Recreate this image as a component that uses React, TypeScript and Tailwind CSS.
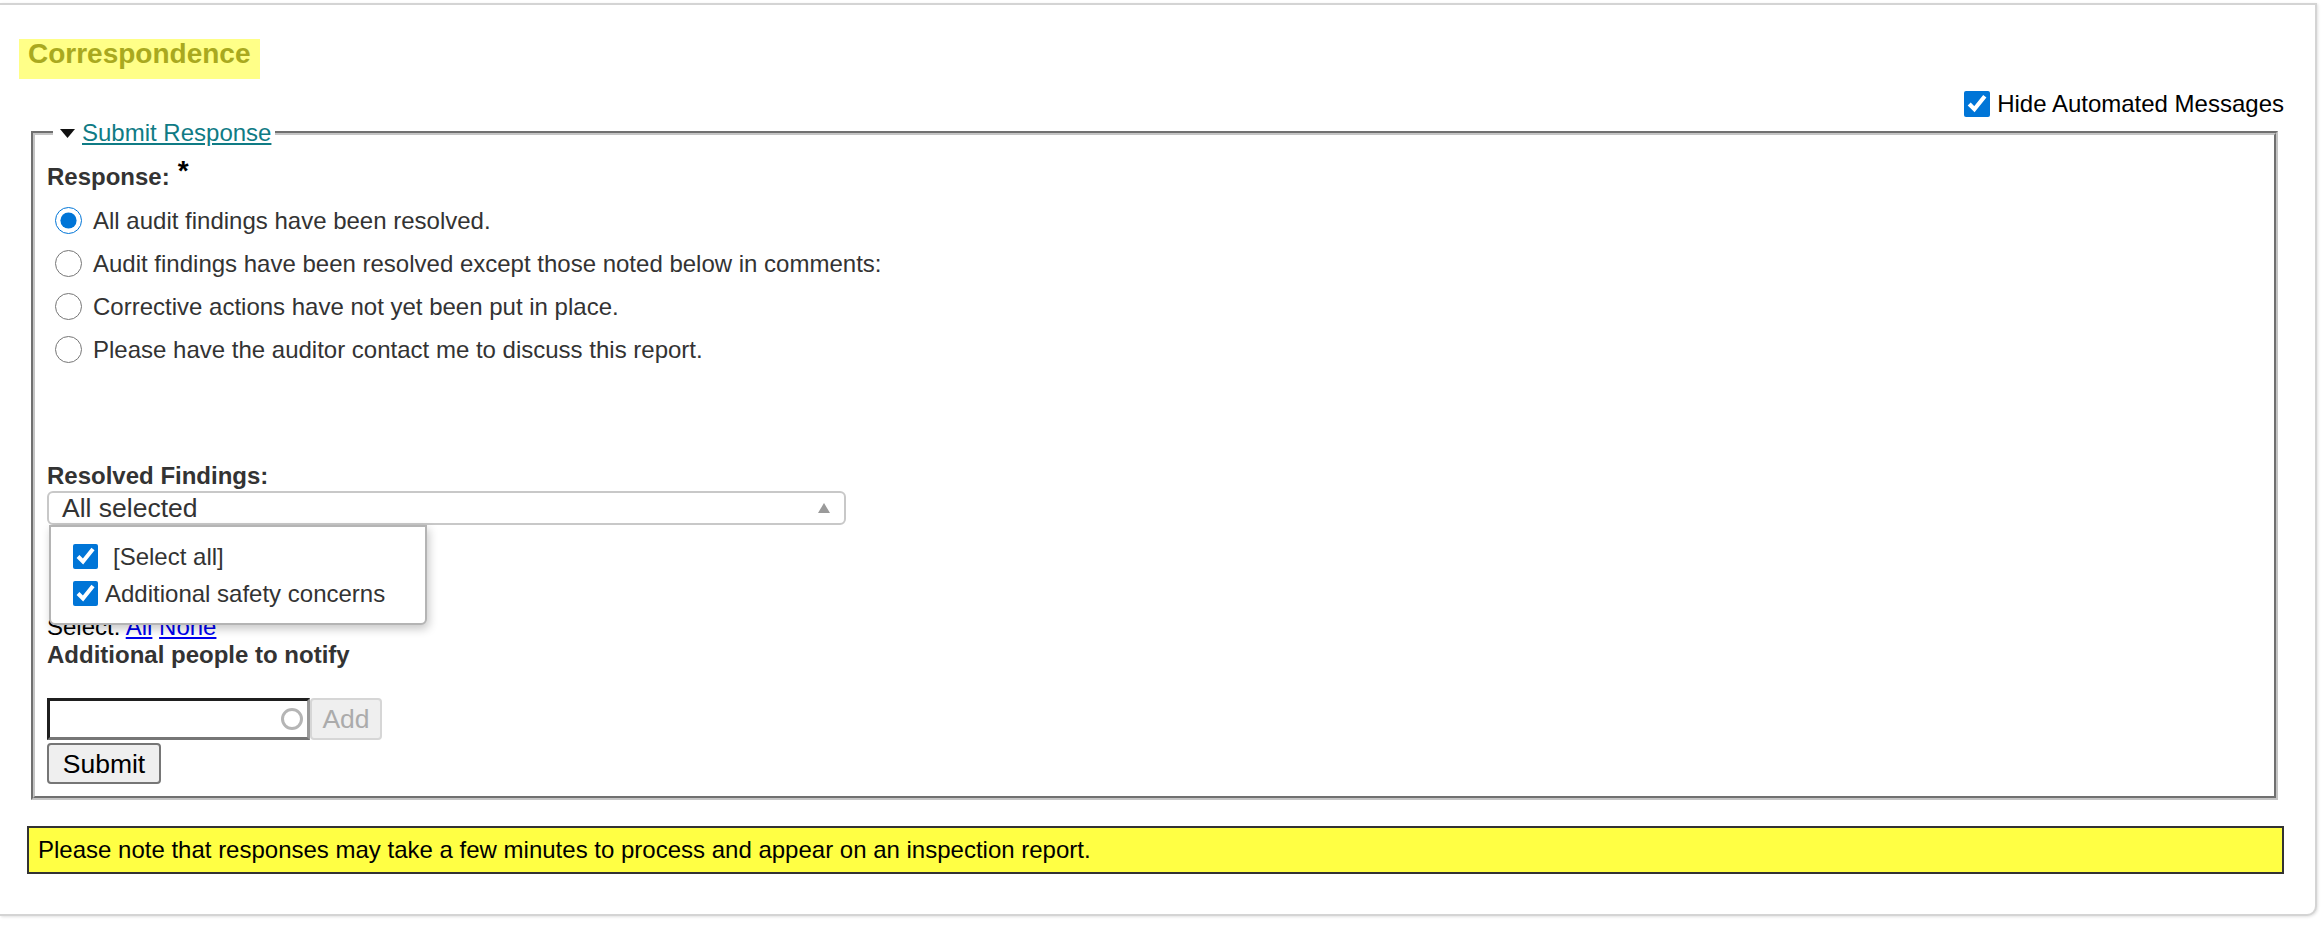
import React from 'react';

const responses = [
  { id: 'all', label: 'All audit findings have been resolved.', checked: true },
  { id: 'except', label: 'Audit findings have been resolved except those noted below in comments:', checked: false },
  { id: 'notyet', label: 'Corrective actions have not yet been put in place.', checked: false },
  { id: 'contact', label: 'Please have the auditor contact me to discuss this report.', checked: false },
];

const findings = [
  { id: 'selectall', label: '[Select all]', gap: 'ml-[15px]' },
  { id: 'safety', label: 'Additional safety concerns', gap: 'ml-[7px]' },
];

const App: React.FC = () => {
  return (
    <div className="min-h-[930px] bg-white pt-[3px] font-['Liberation_Sans',Arial,sans-serif] text-[24px] text-[#333]">
      {/* Card */}
      <div className="mr-[7px] border-2 border-l-0 border-[#d4d4d4] rounded-br-[10px] bg-white pt-[34px] pb-[40px] shadow-[1px_1px_3px_rgba(0,0,0,0.12)]">
        {/* Heading */}
        <div className="ml-[19px] flex">
          <h2 className="h-[40px] bg-[#ffff88] px-[9px] text-[28px] font-bold leading-[30px] text-[#a9a91f]">
            Correspondence
          </h2>
        </div>

        {/* Hide automated */}
        <div className="mt-[12px] flex h-[26px] items-center justify-end pr-[31px]">
          <label className="flex items-center text-black">
            <input type="checkbox" defaultChecked className="m-0 h-[26px] w-[26px] accent-[#0075d7]" />
            <span className="ml-[7px] leading-[26px]">Hide Automated Messages</span>
          </label>
        </div>

        {/* Submit response fieldset */}
        <fieldset className="mt-[2px] ml-[31px] mr-[37px] border-4 border-[#c4c4c4] [border-style:groove] px-[12px] pt-[10px] pb-[12px]">
          <legend className="ml-[6px] flex items-center pl-[7px] pr-[4px] leading-[28px]">
            <svg width="15" height="9" viewBox="0 0 15 9" className="mr-[7px]">
              <polygon points="0,0 15,0 7.5,9" fill="#111" />
            </svg>
            <a href="#" className="text-[#0f7b85] underline">Submit Response</a>
          </legend>

          <div className="leading-[28px] font-bold">
            Response:
            <span className="ml-[8px] align-[5px] text-[28px] text-black">*</span>
          </div>

          <div className="mt-[8px]">
            {responses.map((r) => (
              <label key={r.id} className="flex h-[43px] items-center">
                <input
                  type="radio"
                  name="response"
                  defaultChecked={r.checked}
                  className="m-0 ml-[8px] h-[27px] w-[27px] accent-[#0075d7]"
                />
                <span className="ml-[11px] leading-[28px]">{r.label}</span>
              </label>
            ))}
          </div>

          <div className="mt-[91px] font-bold leading-[28px]">Resolved Findings:</div>

          {/* Multi select */}
          <div className="relative mt-[1px] w-[799px]">
            <div className="flex h-[34px] items-center justify-between rounded-[6px] border-2 border-[#c8c8c8] bg-white pl-[13px] pr-[14px]">
              <span className="text-[26.5px] leading-[30px] text-[#333]">All selected</span>
              <svg width="12" height="10" viewBox="0 0 12 10">
                <polygon points="6,0 12,10 0,10" fill="#9a9a9a" />
              </svg>
            </div>
            <div className="absolute left-[2px] top-full z-10 h-[100px] w-[378px] rounded-b-[6px] border-2 border-[#b4b4b4] bg-white pt-[11px] shadow-[2px_4px_10px_rgba(0,0,0,0.22)]">
              {findings.map((f) => (
                <label key={f.id} className="flex h-[37px] items-center pl-[22px]">
                  <input type="checkbox" defaultChecked className="m-0 h-[25px] w-[25px] accent-[#0075d7]" />
                  <span className={`${f.gap} leading-[28px] text-[#333]`}>{f.label}</span>
                </label>
              ))}
            </div>
          </div>

          <div className="mt-[88px] leading-[28px] text-black">
            Select: <a href="#" className="text-[#0000ee] underline">All</a>{' '}
            <a href="#" className="text-[#0000ee] underline">None</a>
          </div>
          <div className="font-bold leading-[28px]">Additional people to notify</div>

          {/* Notify input */}
          <div className="mt-[29px] flex h-[42px] items-stretch">
            <div className="flex w-[263px] items-center border-[3px] border-t-[#1f1f1f] border-l-[#1f1f1f] border-b-[#767676] border-r-[#9a9a9a] bg-white">
              <input type="text" className="h-full min-w-0 flex-1 bg-transparent outline-none" />
              <svg width="24" height="24" viewBox="0 0 24 24" className="mr-[3px] blur-[0.5px]">
                <circle cx="12" cy="12" r="9.5" fill="none" stroke="#b5b5b5" strokeWidth="3" />
              </svg>
            </div>
            <button
              disabled
              className="w-[72px] rounded-[4px] border-2 border-[#d6d6d6] bg-[#efefef] text-[26.5px] text-[#ababab]"
            >
              Add
            </button>
          </div>
          <button className="mt-[3px] block h-[41px] w-[114px] rounded-[4px] border-2 border-[#767676] bg-[#efefef] text-[26.5px] text-black">
            Submit
          </button>
        </fieldset>

        {/* Notice */}
        <div className="mt-[26px] ml-[27px] mr-[31px] flex h-[48px] items-center border-2 border-[#333] bg-[#ffff44] px-[9px] text-black">
          Please note that responses may take a few minutes to process and appear on an inspection report.
        </div>
      </div>
    </div>
  );
};

export default App;
